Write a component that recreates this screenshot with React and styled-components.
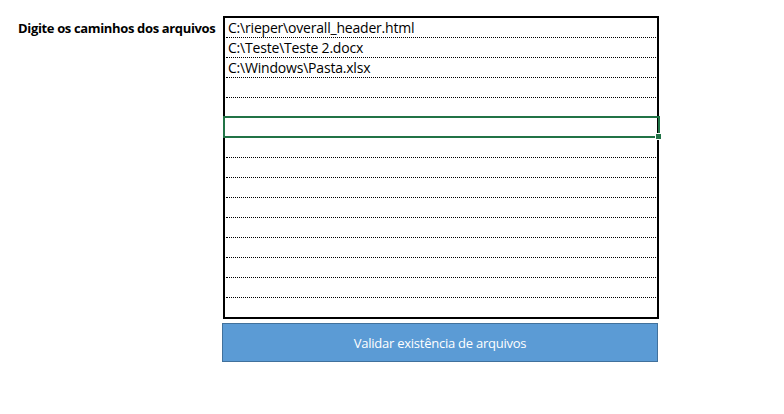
import React from "react";
import styled, { createGlobalStyle } from "styled-components";

const GlobalStyle = createGlobalStyle`
  body {
    margin: 0;
    background: #fff;
    font-family: "Open Sans", "Noto Sans", sans-serif;
  }
`;

const Page = styled.div`
  display: flex;
  align-items: flex-start;
  padding: 16px 0 0 0;
`;

const Label = styled.div`
  width: 223px;
  box-sizing: border-box;
  padding: 3px 0 0 18px;
  font-size: 13px;
  font-weight: 700;
  letter-spacing: -0.35px;
  color: #000;
  line-height: 18px;
`;

const Column = styled.div`
  display: flex;
  flex-direction: column;
  width: 436px;
`;

const Sheet = styled.div`
  border: 2px solid #000;
  padding: 0 1px;
`;

const Row = styled.div`
  position: relative;
  box-sizing: border-box;
  height: ${(p) => (p.$last ? "19px" : "20px")};
  border-bottom: ${(p) => (p.$last ? "none" : "1px dotted #000")};
  padding: 1px 0 0 2px;
  font-size: 14px;
  letter-spacing: -0.2px;
  line-height: 18px;
  color: #000;
  white-space: nowrap;
`;

const Selection = styled.div`
  position: absolute;
  left: -3px;
  right: -4px;
  top: -2px;
  height: 22px;
  box-sizing: border-box;
  border: 2px solid #217346;
`;

const Handle = styled.div`
  position: absolute;
  right: -4px;
  bottom: -4px;
  width: 5px;
  height: 5px;
  background: #217346;
  border: 1px solid #fff;
`;

const Button = styled.button`
  margin-top: 4px;
  margin-left: -1px;
  width: 436px;
  height: 39px;
  background: #5b9bd5;
  border: 1px solid #41719c;
  color: #fff;
  font-family: "Open Sans", "Noto Sans", sans-serif;
  font-size: 13px;
  letter-spacing: -0.25px;
  padding: 0;
  cursor: pointer;
`;

const paths = [
  "C:\\rieper\\overall_header.html",
  "C:\\Teste\\Teste 2.docx",
  "C:\\Windows\\Pasta.xlsx",
];

const ROWS = 15;
const SELECTED = 5;

export default function App() {
  return (
    <>
      <GlobalStyle />
      <Page>
        <Label>Digite os caminhos dos arquivos</Label>
        <Column>
          <Sheet>
            {Array.from({ length: ROWS }).map((_, i) => (
              <Row key={i} $last={i === ROWS - 1}>
                {paths[i] || ""}
                {i === SELECTED && (
                  <Selection>
                    <Handle />
                  </Selection>
                )}
              </Row>
            ))}
          </Sheet>
          <Button>Validar existência de arquivos</Button>
        </Column>
      </Page>
    </>
  );
}
